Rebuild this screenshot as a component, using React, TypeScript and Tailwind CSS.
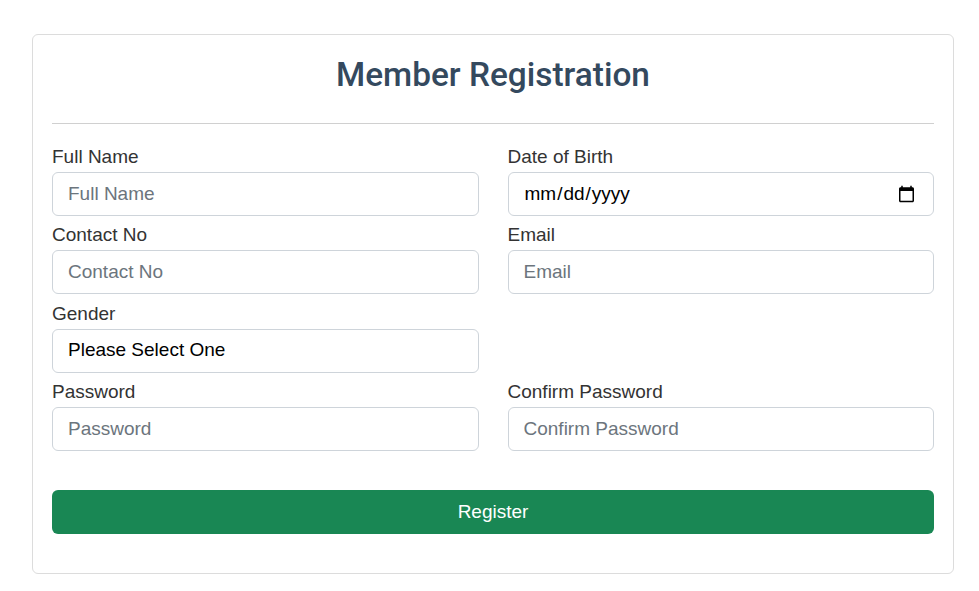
import React from "react";

const inputCls =
  "block w-full h-[44px] rounded-[6px] border border-[#ced4da] bg-white px-[15px] text-[19px] text-[#212529] placeholder:text-[#6c757d] outline-none [font-family:'Liberation_Sans',Arial,sans-serif]";

function Field({ label, children }: { label: string; children: React.ReactNode }) {
  return (
    <div className="flex flex-col">
      <label className="mb-[3px] block pt-[1px] text-[19px] leading-[24px] text-[#333]">{label}</label>
      {children}
    </div>
  );
}

export default function App() {
  return (
    <div className="min-h-[591px] w-[979px] bg-white pt-[34px] [font-family:'Liberation_Sans',Arial,sans-serif]">
      <div className="ml-[32px] w-[922px] rounded-[6px] border border-[#dcdcdc] px-[19px] pt-[21px] pb-[39px]">
        <h2 className="text-center text-[33.4px] leading-[38px] font-medium text-[#34495e] [font-family:Roboto,sans-serif]">
          Member Registration
        </h2>
        <hr className="mt-[29px] mb-[20px] border-t border-[#d0d0d0]" />
        <div className="grid grid-cols-2 gap-x-[29px] gap-y-[6.33px]">
          <Field label="Full Name">
            <input className={inputCls} placeholder="Full Name" />
          </Field>
          <Field label="Date of Birth">
            <input type="date" className={inputCls + " text-black"} />
          </Field>
          <Field label="Contact No">
            <input className={inputCls} placeholder="Contact No" />
          </Field>
          <Field label="Email">
            <input className={inputCls} placeholder="Email" />
          </Field>
          <Field label="Gender">
            <select className={inputCls + " appearance-none text-black"} defaultValue="">
              <option value="">Please Select One</option>
              <option value="m">Male</option>
              <option value="f">Female</option>
            </select>
          </Field>
          <div />
          <Field label="Password">
            <input type="password" className={inputCls} placeholder="Password" />
          </Field>
          <Field label="Confirm Password">
            <input type="password" className={inputCls} placeholder="Confirm Password" />
          </Field>
        </div>
        <button className="mt-[39px] block h-[44px] w-full rounded-[6px] bg-[#198754] text-[19px] text-white">
          Register
        </button>
      </div>
    </div>
  );
}
